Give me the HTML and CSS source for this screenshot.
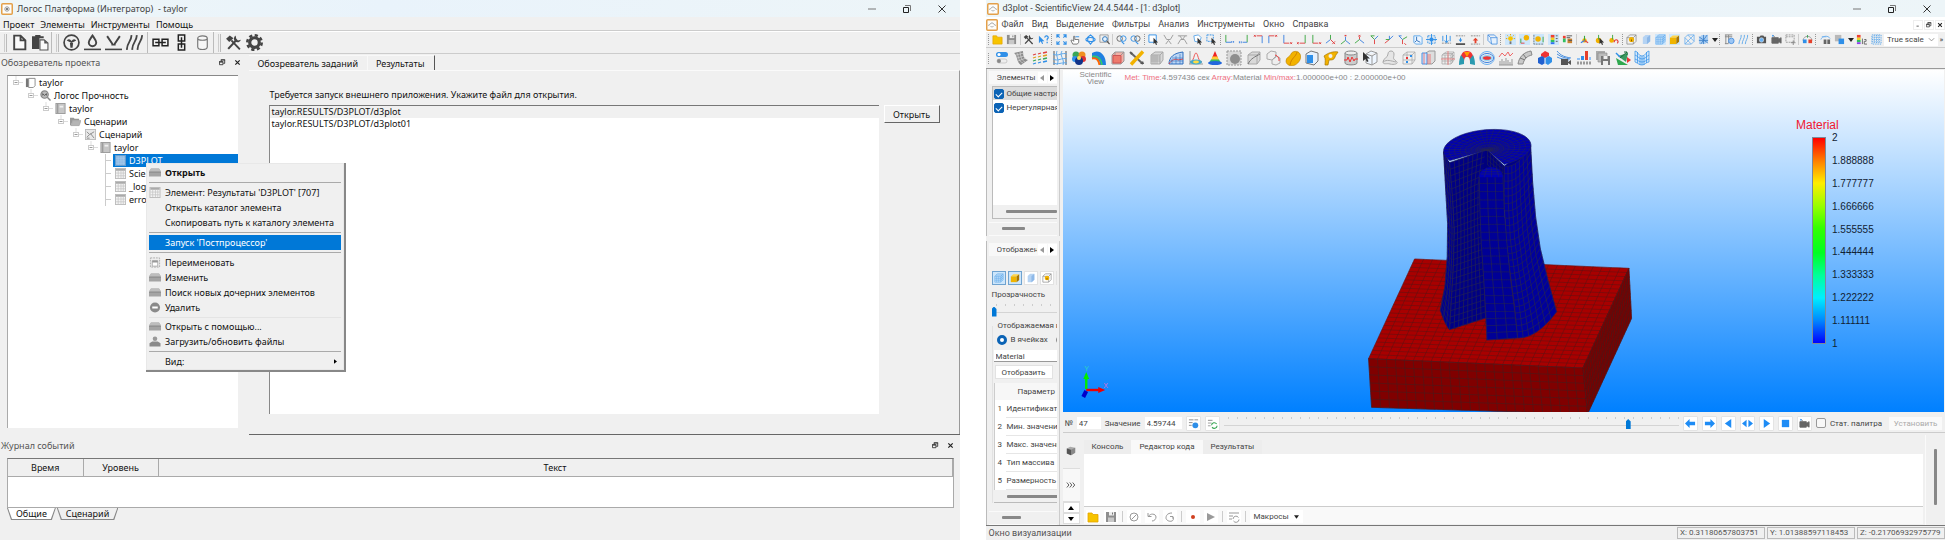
FILE: index.html
```html
<!DOCTYPE html>
<html lang="ru">
<head>
<meta charset="utf-8">
<title>Логос Платформа</title>
<link rel="stylesheet" href="styles.css">
</head>
<body class="desk">
<svg class="defs" aria-hidden="true">
  <defs>
    <symbol id="min" viewBox="0 0 10 10"><path d="M1 5h8" stroke="#777" fill="none"/></symbol>
    <symbol id="max" viewBox="0 0 10 10"><path d="M1.5 3.5h5v5h-5z" stroke="#222" fill="none"/><path d="M3 1.5h5.5V7" stroke="#777" fill="none"/></symbol>
    <symbol id="cls" viewBox="0 0 10 10"><path d="M1.5 1.5l7 7M8.500 1.500l-7 7" stroke="#333" fill="none"/></symbol>
    <symbol id="float" viewBox="0 0 8 8"><path d="M.5 3.500h4v3h-4zM2.500 3V1h4v4H5" stroke="#333" fill="none"/><path d="M0 3h5M2 1h5" stroke="#333"/></symbol>
    <symbol id="x8" viewBox="0 0 8 8"><path d="M1.500 1.500l5 5M6.500 1.500l-5 5" stroke="#222" stroke-width="1.400" fill="none"/></symbol>
    <symbol id="app" viewBox="0 0 12 12"><rect x=".75" y=".75" width="10.500" height="10.500" rx="1" fill="#fdfdfb" stroke="#e3a04a" stroke-width="1.500"/><circle cx="6" cy="6" r="2.200" fill="none" stroke="#999"/><circle cx="6" cy="6" r="1" fill="#555"/></symbol>
    <symbol id="eye" viewBox="0 0 12 12"><rect x=".75" y=".75" width="10.500" height="10.500" rx="1" fill="#fdfdfb" stroke="#e3a04a" stroke-width="1.500"/><path d="M2 6.500l2-1 1-1.500h2l1 1.500 2 1M4.500 7l1 1h1l1-1" fill="none" stroke="#999" stroke-width=".8"/></symbol>
    <symbol id="sheet" viewBox="0 0 12 12"><rect x=".5" y=".5" width="11" height="11" fill="#f4f4f4" stroke="#bbb"/><path d="M1 2h10" stroke="#aaa" stroke-width="2"/><path d="M1 5.500h10M1 8.500h10M3.500 3v8M6.500 3v8M9 3v8" stroke="#c4c4c4" stroke-width=".8"/></symbol>
    <symbol id="case" viewBox="0 0 12 10"><path d="M2 1h8l2 3v5H0V4z" fill="#a4a4a4"/><path d="M2 1h8l1.500 2.500H.5z" fill="#bdbdbd"/><path d="M0 5h12" stroke="#8c8c8c" stroke-width=".7"/></symbol>
    <symbol id="book" viewBox="0 0 12 12"><rect x="1" y=".5" width="10" height="11" fill="#c6c6c6" stroke="#999"/><path d="M3 1v10" stroke="#888"/><path d="M5 3h4v2H5z" fill="#eee"/></symbol>
    <symbol id="exp" viewBox="0 0 10 13"><path d="M3 0v4M5.500 6.500H10" stroke="#ddd" fill="none"/><rect x=".5" y="4.500" width="5" height="4" fill="#fff" stroke="#ccc"/><path d="M1.500 6.500h3" stroke="#999"/></symbol>
    <symbol id="tee" viewBox="0 0 10 13"><path d="M2.500 0v13M3 6.500h5" stroke="#ccc" fill="none"/></symbol>
    <symbol id="fold" viewBox="0 0 12 12"><path d="M1 2h4l1 1.500h5V11H1z" fill="#f7c400" stroke="#e5a400" stroke-width=".8"/></symbol>
    <symbol id="save" viewBox="0 0 12 12"><path d="M1 1h10v10H1z" fill="#8e8e8e"/><path d="M4 1h5v3.500H4z" fill="#eee"/><path d="M7 1.500h1v2H7z" fill="#777"/><path d="M3 6.500h6V11H3z" fill="#c8c8c8"/></symbol>
    <symbol id="tools" viewBox="0 0 16 16"><path d="M3 14l7.500-8" stroke="#444" stroke-width="2"/><path d="M10 1.500a3.400 3.400 0 1 0 5 4l-2.800.5-1.700-1.700z" fill="#444"/><path d="M6 6l8 8.500" stroke="#444" stroke-width="1.800"/><path d="M1 4.500L4.500 1.500 8 4 4 7.500z" fill="#444"/></symbol>
    <symbol id="cubeY" viewBox="0 0 12 12"><path d="M1 4l3-2.500h7L8 4z" fill="#ffd54a"/><path d="M1 4h7v7H1z" fill="#f0b400"/><path d="M8 4l3-2.500V8.500L8 11z" fill="#a87600"/></symbol>
    <symbol id="cubeB" viewBox="0 0 12 12"><path d="M1 4l3-3h7v7l-3 3H1zM1 4h7v7M8 4l3-3M3.300 4v7M5.700 4v7M1 6.300h7l3-3M1 8.600h7l3-3M2.500 2.500h7v7" fill="none" stroke="#5fa8ea" stroke-width=".7"/></symbol>
    <symbol id="cubeL" viewBox="0 0 12 12"><path d="M2 3.500l3-2.500h5v7l-3 3H2z" fill="#b5d3f3"/><path d="M6.500 4v7L10 8V1z" fill="#8db8e8"/></symbol>
    <symbol id="cubeD" viewBox="0 0 12 12"><path d="M1 4l3-3h7v7l-3 3H1zM1 4h7v7M8 4l3-3" fill="none" stroke="#888" stroke-width=".8"/><circle cx="6" cy="6" r="2.800" fill="#f2b200"/><path d="M6 6v2" stroke="#7a5600"/></symbol>
    <symbol id="cur" viewBox="0 0 12 12"><path d="M6 4v7l1.600-1.400L8.700 12l1.200-.6-1-2.200H11z" fill="#333"/></symbol>
    <symbol id="axes" viewBox="0 0 12 12"><path d="M6 7V2" stroke="#3aa640" stroke-width="1.200"/><path d="M6 7l4 2.500" stroke="#e04040" stroke-width="1.200"/><path d="M6 7L2 9.500" stroke="#3a80e0" stroke-width="1.200"/></symbol>
    <symbol id="loop" viewBox="0 0 12 12"><rect x="1" y="2" width="5" height="1" fill="#888"/><path d="M1 5.500h4M1 8.500h3" stroke="#999"/><path d="M5 8a3 3 0 0 1 5.500-1.500M11 8.500a3 3 0 0 1-5.500 1.500" stroke="#3aa655" fill="none" stroke-width="1.200"/></symbol>
    <symbol id="cam" viewBox="0 0 12 12"><path d="M2 1.500l2 1.500M1 4h7v6H1zM8 6l3-2v6L8 8z" fill="#666" stroke="#666"/><circle cx="2" cy="2" r=".9" fill="#39f"/></symbol>
    <symbol id="bx" viewBox="0 0 16 16"><path d="M2 5l4-3h8v8l-3 4H2z" fill="#d9d9d9" stroke="#a9a9a9"/><path d="M2 5h9v9M11 5l3-3" fill="none" stroke="#a9a9a9"/></symbol>
    <symbol id="grid" viewBox="0 0 16 16"><path d="M2 5l4-3h8v8l-3 4H2zM2 5h9v9M11 5l3-3M5 5v9M8 5v9M2 8h9l3-3M2 11h9l3-3M3.500 3.500h9v9" fill="none" stroke="#aaa" stroke-width=".8"/></symbol>
  </defs>
</svg>

<section class="win left-win" aria-label="Логос Платформа">
  <header class="title">
    <svg class="i12"><use href="#app"/></svg><span class="grow">Логос Платформа (Интегратор)&nbsp; - taylor</span>
    <div class="winbtns"><button aria-label="Свернуть"><svg><use href="#min"/></svg></button><button aria-label="Окно"><svg><use href="#max"/></svg></button><button aria-label="Закрыть"><svg><use href="#cls"/></svg></button></div>
  </header>
  <nav class="menubar"><button>Проект</button><button>Элементы</button><button>Инструменты</button><button>Помощь</button></nav>
  <div class="bigbar">
    <i class="grip2"></i>
    <button aria-label="Создать"><svg viewBox="0 0 16 16"><path d="M3 1.500h6l4.500 4.500v8.500H3zM9 1.500V6h4.500" fill="#fafafa" stroke="#444" stroke-width="1.800"/></svg></button>
    <button aria-label="Вставить"><svg viewBox="0 0 16 16"><path d="M0 2h3V1h5v1h3v2H7v10H0z" fill="#444"/><path d="M7.500 5.500h4l3.500 3V15H7.500z" fill="#fafafa" stroke="#555"/><path d="M11.500 5.500V9H15z" fill="#555"/></svg></button>
    <i class="vline"></i><i class="grip2"></i>
    <button aria-label="Вентиляция"><svg viewBox="0 0 16 16"><circle cx="8" cy="8" r="7" fill="none" stroke="#444" stroke-width="1.600"/><path d="M8 8.500L3.500 6Q6 3.500 8 6.500Q10 3.500 12.500 6zM6.500 8.500h3L9 13H7z" fill="#444"/></svg></button>
    <button aria-label="Жидкость"><svg viewBox="0 0 16 16"><path d="M8 1.500C6 4.500 4.500 6 4.500 8a3.500 3.500 0 0 0 7 0C11.500 6 10 4.500 8 1.500z" fill="none" stroke="#444" stroke-width="1.800"/><path d="M0 14.500h16" stroke="#444" stroke-width="1.500"/></svg></button>
    <button aria-label="Прочность"><svg viewBox="0 0 16 16"><path d="M2 2l5 7.500M14 2L9 9.500M6 10h4" fill="none" stroke="#444" stroke-width="1.800"/><path d="M0 14.500h16" stroke="#444" stroke-width="1.500"/></svg></button>
    <button aria-label="Тепло"><svg viewBox="0 0 16 16"><path d="M5 1C6 6 0 9 1 15M10 1C11 6 5 9 6 15M15 1c1 5-5 8-4 14" fill="none" stroke="#444" stroke-width="1.700"/></svg></button>
    <i class="vline lone"></i>
    <button aria-label="Связь горизонтальная"><svg viewBox="0 0 16 16"><path d="M1 5h5.500v6H1zM9.500 5H15v6H9.500zM3 8h10" fill="none" stroke="#222" stroke-width="1.400"/></svg></button>
    <button aria-label="Связь вертикальная"><svg viewBox="0 0 16 16"><path d="M5 1h6v5.500H5zM5 9.500h6V15H5zM8 3v10" fill="none" stroke="#222" stroke-width="1.400"/></svg></button>
    <button aria-label="База"><svg viewBox="0 0 16 16"><path d="M3.500 4v8c0 3.500 9 3.500 9 0V4c0-3-9-3-9 0c0 2.500 9 2.500 9 0" fill="#f6f6f6" stroke="#777" stroke-width="1.100"/></svg></button>
    <i class="vline"></i><i class="grip2"></i>
    <button aria-label="Сервис"><svg><use href="#tools"/></svg></button>
    <button aria-label="Настройки"><svg viewBox="0 0 16 16"><circle cx="8" cy="8" r="4.500" fill="none" stroke="#444" stroke-width="3"/><circle cx="8" cy="8" r="6.800" fill="none" stroke="#444" stroke-width="2.400" stroke-dasharray="3 2.340"/></svg></button>
  </div>

  <div class="work">
    <section class="dock">
      <header class="dockhead"><span class="grow">Обозреватель проекта</span><button aria-label="Открепить"><svg><use href="#float"/></svg></button><button aria-label="Закрыть"><svg><use href="#x8"/></svg></button></header>
      <div class="tree">
        <ul><li><div class="row"><svg class="ex"><use href="#exp"/></svg><svg class="ti" viewBox="0 0 12 12"><path d="M1 1.500h3V11H1z" fill="#777"/><path d="M4 1.500h7v8l-2 2H4z" fill="#fff" stroke="#888"/></svg>taylor</div>
        <ul><li><div class="row"><svg class="ex"><use href="#exp"/></svg><svg class="ti" viewBox="0 0 12 12"><circle cx="5" cy="5" r="4" fill="#bbb" stroke="#888" stroke-width="1.300"/><path d="M8 8l3.500 3.500" stroke="#888" stroke-width="1.600"/><path d="M3 6V4l2 2 2-2v2" fill="none" stroke="#555"/></svg>Логос Прочность</div>
        <ul><li><div class="row"><svg class="ex"><use href="#exp"/></svg><svg class="ti"><use href="#book"/></svg>taylor</div>
        <ul><li><div class="row"><svg class="ex"><use href="#exp"/></svg><svg class="ti" viewBox="0 0 12 12"><path d="M0 2h4l1 1h5v2H3l-2 5H0z" fill="#999"/><path d="M3 5h9l-2 5.500H1z" fill="#b5b5b5" stroke="#999" stroke-width=".6"/></svg>Сценарии</div>
        <ul><li><div class="row"><svg class="ex"><use href="#exp"/></svg><svg class="ti" viewBox="0 0 12 12"><rect x=".5" y=".5" width="11" height="11" fill="#e8e8e8" stroke="#bbb"/><path d="M2 3l3 3-3 3M5 6l5-3M6 5l4 5M2 10h3" stroke="#888" fill="none"/></svg>Сценарий</div>
        <ul><li><div class="row"><svg class="ex"><use href="#exp"/></svg><svg class="ti"><use href="#book"/></svg>taylor</div>
        <ul>
          <li><div class="row"><svg class="ex"><use href="#tee"/></svg><div class="leaf sel"><svg class="ti" viewBox="0 0 12 12"><rect x=".5" y=".5" width="11" height="11" fill="#8cb8e2" stroke="#6a9dcc"/><path d="M1 3.500h10M1 6.500h10M1 9h10M3.500 1v10M6.500 1v10M9 1v10" stroke="#a9cbea" stroke-width=".7"/></svg>D3PLOT</div></div></li>
          <li><div class="row"><svg class="ex"><use href="#tee"/></svg><div class="leaf"><svg class="ti"><use href="#sheet"/></svg>Scie</div></div></li>
          <li><div class="row"><svg class="ex"><use href="#tee"/></svg><div class="leaf"><svg class="ti"><use href="#sheet"/></svg>_log</div></div></li>
          <li><div class="row"><svg class="ex"><use href="#tee"/></svg><div class="leaf"><svg class="ti"><use href="#sheet"/></svg>erro</div></div></li>
        </ul></li></ul></li></ul></li></ul></li></ul></li></ul></li></ul>
        <div class="ctx" role="menu">
          <button class="strong" role="menuitem"><svg><use href="#case"/></svg>Открыть</button><hr>
          <button role="menuitem"><svg><use href="#sheet"/></svg>Элемент: Результаты 'D3PLOT' [707]</button>
          <button role="menuitem"><svg></svg>Открыть каталог элемента</button>
          <button role="menuitem"><svg></svg>Скопировать путь к каталогу элемента</button><hr>
          <button class="hot" role="menuitem"><svg></svg>Запуск 'Постпроцессор'</button><hr>
          <button role="menuitem"><svg viewBox="0 0 12 12"><path d="M1 1h10v10H1z" fill="#eee" stroke="#aaa" stroke-dasharray="2 1"/><path d="M3 4h6v6H3z" fill="#fff" stroke="#aaa"/><path d="M3 5h6" stroke="#999" stroke-width="2"/></svg>Переименовать</button>
          <button role="menuitem"><svg><use href="#case"/></svg>Изменить</button>
          <button role="menuitem"><svg><use href="#case"/></svg>Поиск новых дочерних элементов</button>
          <button role="menuitem"><svg viewBox="0 0 12 12"><circle cx="6" cy="6" r="5.500" fill="#8a8a8a"/><path d="M3 6h6" stroke="#fff" stroke-width="2.200"/></svg>Удалить</button><hr class="pale">
          <button role="menuitem"><svg><use href="#case"/></svg>Открыть с помощью...</button>
          <button role="menuitem"><svg viewBox="0 0 12 12"><circle cx="6" cy="3" r="2.500" fill="#999"/><path d="M0 11.500V8l3-2h6l3 2v3.500z" fill="#8a8a8a"/></svg>Загрузить/обновить файлы</button><hr>
          <button role="menuitem"><svg></svg><span class="grow">Вид:</span><svg class="arr" viewBox="0 0 4 6"><path d="M0 0l4 3-4 3z" fill="#000"/></svg></button>
        </div>
      </div>
    </section>

    <section class="center">
      <div class="tabs"><button>Обозреватель заданий</button><button class="on">Результаты</button></div>
      <div class="page">
        <p class="ask">Требуется запуск внешнего приложения. Укажите файл для открытия.</p>
        <div class="pick">
          <ul class="files"><li class="cur">taylor.RESULTS/D3PLOT/d3plot</li><li>taylor.RESULTS/D3PLOT/d3plot01</li></ul>
          <button class="classic">Открыть</button>
        </div>
      </div>
    </section>
  </div>

  <section class="log">
    <header class="dockhead"><span class="grow">Журнал событий</span><button aria-label="Открепить"><svg><use href="#float"/></svg></button><button aria-label="Закрыть"><svg><use href="#x8"/></svg></button></header>
    <div class="logbox"><table><thead><tr><th class="c1">Время</th><th class="c1">Уровень</th><th>Текст</th></tr></thead></table></div>
    <div class="flaps"><button class="on"><span>Общие</span></button><button><span>Сценарий</span></button></div>
  </section>
</section>

<section class="win right-win" aria-label="ScientificView">
  <header class="title">
    <svg class="i12"><use href="#eye"/></svg><span class="grow">d3plot - ScientificView 24.4.5444 - [1: d3plot]</span>
    <div class="winbtns"><button aria-label="Свернуть"><svg><use href="#min"/></svg></button><button aria-label="Окно"><svg><use href="#max"/></svg></button><button aria-label="Закрыть"><svg><use href="#cls"/></svg></button></div>
  </header>
  <nav class="menubar2"><svg class="i12"><use href="#eye"/></svg><button>Файл</button><button>Вид</button><button>Выделение</button><button>Фильтры</button><button>Анализ</button><button>Инструменты</button><button>Окно</button><button>Справка</button>
    <div class="mdi"><button aria-label="Свернуть"><svg viewBox="0 0 8 8"><path d="M2 5.500h3" stroke="#333"/></svg></button><button aria-label="Окно"><svg><use href="#float"/></svg></button><button aria-label="Закрыть"><svg><use href="#x8"/></svg></button></div>
  </nav>

  <div class="bar1" role="toolbar">
    <i class="grip"></i>
    <button><svg><use href="#fold"/></svg></button><button><svg><use href="#save"/></svg></button><i class="sp"></i>
    <button><svg><use href="#tools"/></svg></button>
    <button><svg viewBox="0 0 12 12"><path d="M1 2v8l2-2 1.500 3 1-.5L4.500 8H7z" fill="#2f8fe8"/><path d="M7.500 4a1.800 1.800 0 1 1 2.500 1.500V7M10 8.500v1.500" fill="none" stroke="#2f8fe8" stroke-width="1.300"/></svg></button>
    <i class="grip"></i>
    <button><svg viewBox="0 0 12 12"><path d="M1 4V1h3M8 1h3v3M11 8v3H8M4 11H1V8M1 1l3 3M11 1L8 4M11 11L8 8M1 11l3-3" fill="none" stroke="#2f8fe8" stroke-width="1.200"/></svg></button>
    <button><svg viewBox="0 0 12 12"><path d="M3 11L1 7l1.500-.5L4 8V2.500h1.200V6h4.300v3L8 11z" fill="#fff" stroke="#666" stroke-width=".9"/><path d="M6 3h4" stroke="#2f8fe8"/></svg></button>
    <button><svg viewBox="0 0 12 12"><path d="M6 1l3 2.500v4L6 11 3 7.500v-4zM1 6c0-3 10-3 10 0s-10 3-10 0" fill="none" stroke="#2f8fe8" stroke-width="1.200"/></svg></button>
    <button><svg viewBox="0 0 12 12"><path d="M1 1h9v8H1z" fill="none" stroke="#888" stroke-width=".8"/><circle cx="6.500" cy="5.500" r="2.600" fill="#e6f3ff" stroke="#2470b8"/><path d="M8.500 7.500L11.500 11" stroke="#555" stroke-width="1.300"/></svg></button>
    <i class="sp"></i>
    <button><svg viewBox="0 0 12 12"><circle cx="4" cy="5" r="3" fill="none" stroke="#666"/><circle cx="8" cy="5" r="3" fill="none" stroke="#2f8fe8"/><path d="M6 8l3 3" stroke="#2f8fe8" stroke-width="1.200"/></svg></button>
    <button><svg viewBox="0 0 12 12"><circle cx="4" cy="5" r="3" fill="none" stroke="#2f8fe8"/><circle cx="8" cy="5" r="3" fill="none" stroke="#666"/><path d="M6 8l3 3" stroke="#2f8fe8" stroke-width="1.200"/></svg></button>
    <i class="grip"></i>
    <button><svg viewBox="0 0 12 12"><path d="M1 1h8v8H1z" fill="#fff" stroke="#2f8fe8"/><use href="#cur"/></svg></button>
    <button><svg viewBox="0 0 12 12"><path d="M1 1l3 5h4l3-5M3 11l3-4 3 4" fill="none" stroke="#999"/></svg></button>
    <button><svg viewBox="0 0 12 12"><path d="M1 2h10M3 2l3 4 3-4M1 11l3-5h4l3 5" fill="none" stroke="#999"/></svg></button>
    <button><svg viewBox="0 0 12 12"><path d="M2 2l5-1 3 3-2 5-5-1z" fill="#fff" stroke="#5fa8ea"/><use href="#cur"/></svg></button>
    <button><svg viewBox="0 0 12 12"><path d="M1 1h7v7H1z" fill="none" stroke="#2f8fe8" stroke-dasharray="2 1"/><use href="#cur"/></svg></button>
    <i class="grip"></i>
    <button><svg viewBox="0 0 12 12"><path d="M2 1v8" stroke="#3aa640"/><path d="M2 9h6" stroke="#3a80e0"/><path d="M8 8.500h3" stroke="#3a80e0" stroke-width="2" stroke-dasharray="1 1"/></svg></button>
    <button><svg viewBox="0 0 12 12"><path d="M10 1v8" stroke="#3aa640"/><path d="M10 9H5" stroke="#3a80e0"/><path d="M1 9h4" stroke="#3a80e0" stroke-width="2" stroke-dasharray="1 1"/></svg></button>
    <button><svg viewBox="0 0 12 12"><path d="M10 2v8" stroke="#3a80e0"/><path d="M10 2H4M1 1l2 2M3 1L1 3" stroke="#e04040"/></svg></button>
    <button><svg viewBox="0 0 12 12"><path d="M2 2v8" stroke="#3a80e0"/><path d="M2 2h6M9 1l2 2M11 1L9 3" stroke="#e04040"/></svg></button>
    <button><svg viewBox="0 0 12 12"><path d="M2 1v9" stroke="#3a80e0"/><path d="M2 10h6M9 9l2 2M11 9l-2 2" stroke="#e04040"/></svg></button>
    <button><svg viewBox="0 0 12 12"><path d="M10 1v9" stroke="#3aa640"/><path d="M10 10H4M1 9l2 2M3 9l-2 2" stroke="#e04040"/></svg></button>
    <button><svg viewBox="0 0 12 12"><path d="M2 1v9" stroke="#3aa640"/><path d="M2 10h6M9 9l2 2M11 9l-2 2" stroke="#e04040"/></svg></button>
    <button><svg viewBox="0 0 12 12"><path d="M6 6V1" stroke="#3aa640"/><path d="M6 6l-5 4" stroke="#3a80e0"/><path d="M6 6l3 3M8 8l3 3M11 8l-3 3" stroke="#e04040"/></svg></button>
    <button><svg viewBox="0 0 12 12"><path d="M6 7V3M6 7l5 4" stroke="#3a80e0"/><path d="M6 7l-5 4" stroke="#3aa640"/><path d="M5 1h2v1.500H5z" fill="#e04040"/></svg></button>
    <button><svg viewBox="0 0 12 12"><path d="M6 6V3M5 1l2 2M7 1L5 3" stroke="#e04040"/><path d="M6 6l5 4" stroke="#3a80e0"/><path d="M6 6l-5 4" stroke="#3aa640"/></svg></button>
    <button><svg viewBox="0 0 12 12"><path d="M6 6V11" stroke="#e04040"/><path d="M6 6l4-4" stroke="#3a80e0"/><path d="M6 6L2 2h4" stroke="#3aa640" fill="none"/></svg></button>
    <button><svg viewBox="0 0 12 12"><path d="M7 6l-5 4" stroke="#e04040"/><path d="M7 6l4-4M7 6V2" stroke="#3a80e0"/><path d="M7 6H3" stroke="#3aa640"/></svg></button>
    <button><svg viewBox="0 0 12 12"><path d="M6 6V11M8 10l2 2" stroke="#e04040"/><path d="M6 6l5-3" stroke="#3aa640"/><path d="M6 6L2 2h3" stroke="#3a80e0" fill="none"/></svg></button>
    <button><svg viewBox="0 0 12 12"><path d="M2 2h7l2 2v7H4L2 9z" fill="#eaf4ff" stroke="#5fa8ea"/><path d="M5 3v4l4 2M5 7l-2 2" stroke="#2f6fb8" fill="none"/></svg></button>
    <button><svg viewBox="0 0 12 12"><path d="M6 0v12M0 6h12" stroke="#2f8fe8"/><path d="M2 2h8v8H2z" fill="none" stroke="#2f8fe8" stroke-dasharray="2 1"/><path d="M4 4h4v4H4z" fill="#2f8fe8"/></svg></button>
    <button><svg viewBox="0 0 12 12"><path d="M2 2v6M10 2v6M6 1v8M4 7l2 3 2-3" stroke="#2f8fe8" fill="none"/><path d="M1 10h10" stroke="#888" stroke-dasharray="2 1"/></svg></button>
    <button><svg viewBox="0 0 12 12"><path d="M1 2h10" stroke="#888" stroke-dasharray="2 1"/><path d="M4 6h4L6 9zM5.500 4h1v3h-1z" fill="#2f8fe8"/><path d="M1 11h10" stroke="#222" stroke-width="1.500"/></svg></button>
    <button><svg viewBox="0 0 12 12"><path d="M1 2h10M1 11h10" stroke="#888" stroke-dasharray="2 1"/><path d="M3 7l3-3 3 3H7v3H5V7z" fill="#e5402b"/></svg></button>
    <i class="sp"></i>
    <button><svg viewBox="0 0 12 12"><path d="M1 1h7l3 3v7H5L1 7zM1 1l3 3h7M4 4l1 7" fill="#e6f1fd" stroke="#4a90e0" stroke-width=".9"/></svg></button>
    <i class="grip"></i>
    <button class="on"><svg viewBox="0 0 12 12"><circle cx="6" cy="5" r="2.600" fill="#f7c400"/><path d="M5 8h2v3H5z" fill="#777"/><path d="M6 0v1.500M1 5h1.500M9.500 5H11M2.500 1.500l1 1M9.500 1.500l-1 1" stroke="#e5a400"/></svg></button>
    <button class="on"><svg viewBox="0 0 12 12"><circle cx="8" cy="4" r="3" fill="#f2b200"/><path d="M2 5v5" stroke="#3aa640"/><path d="M2 10h4" stroke="#e04040"/></svg></button>
    <button class="on"><svg viewBox="0 0 12 12"><circle cx="5.500" cy="5.500" r="3" fill="#f2b200"/><path d="M1 1v10h10" stroke="#777" stroke-dasharray="2 1" fill="none"/><path d="M11 3v6" stroke="#3aa640"/></svg></button>
    <button class="on"><svg viewBox="0 0 12 12"><path d="M3 1h4v3H3z" fill="#f04030"/><path d="M3 4h4v2.500H3z" fill="#f0d020"/><path d="M3 6.500h4V9H3z" fill="#30c060"/><path d="M3 9h4v2H3z" fill="#3070f0"/><path d="M8.500 2h2M8.500 5h2M8.500 8h2" stroke="#555"/></svg></button>
    <button><svg viewBox="0 0 12 12"><path d="M1 2h3v3H1z" fill="#f04030"/><path d="M1 5h3v4H1z" fill="#30c060"/><path d="M6 5h5v5H6z" fill="#c98030"/><path d="M5 2h6M5 4h4M7 7h4" stroke="#555"/></svg></button>
    <i class="sp"></i>
    <button><svg viewBox="0 0 12 12"><circle cx="6" cy="7" r="2.400" fill="#f2b200"/><use href="#axes"/></svg></button>
    <button><svg viewBox="0 0 12 12"><circle cx="5" cy="7" r="3" fill="#f2b200"/><path d="M5 1v5" stroke="#3aa640"/><use href="#cur"/></svg></button>
    <button><svg viewBox="0 0 12 12"><circle cx="4" cy="7" r="2.600" fill="#f2b200"/><path d="M5 1v5" stroke="#3aa640"/><path d="M7 9a2 2 0 1 1 3 1" stroke="#e04040" fill="none" stroke-width="1.300"/></svg></button>
    <i class="grip"></i>
    <button><svg><use href="#cubeD"/></svg></button><button><svg><use href="#cubeL"/></svg></button><button class="on"><svg><use href="#cubeB"/></svg></button><button class="on"><svg><use href="#cubeY"/></svg></button>
    <button><svg viewBox="0 0 12 12"><path d="M1 4l3-3h7v7l-3 3H1zM1 4l7 7M4 1l7 7M1 11L11 1" fill="none" stroke="#6fb0ee" stroke-width=".9"/></svg></button>
    <button><svg viewBox="0 0 12 12"><path d="M1 4l3-3h7v7l-3 3H1z" fill="#a9cdf2"/><path d="M1 3l10 7M3 11L10 1M1 7h10M6 1v10" stroke="#3a80c8" stroke-width=".9"/></svg></button>
    <button class="car"><svg viewBox="0 0 6 4"><path d="M0 0h6L3 4z" fill="#222"/></svg></button>
    <i class="grip"></i>
    <button><svg viewBox="0 0 12 12"><path d="M1 1h8M1 3h8M2 1v10M5 1v9M1 10.500h4" stroke="#888" fill="none"/><circle cx="8" cy="7.500" r="3" fill="#9cc6f4" stroke="#4a90e0"/></svg></button>
    <button><svg viewBox="0 0 12 12"><path d="M3.500 1C4 5 1 7 1 11M7 1c.5 4-2.500 6-2.500 10M10.500 1c.5 4-2.500 6-2.500 10" stroke="#5fa8ea" fill="none"/></svg></button>
    <i class="grip"></i>
    <button><svg viewBox="0 0 12 12"><path d="M1 3h3l1-1.500h3L9 3h2v7H1z" fill="#555"/><circle cx="6" cy="6.500" r="2.400" fill="#6ab4f8" stroke="#ddd" stroke-width=".7"/></svg></button>
    <button><svg><use href="#cam"/></svg></button>
    <button><svg viewBox="0 0 12 12"><path d="M1 1h9v8H1zM1 3h9" fill="none" stroke="#999" stroke-dasharray="2 1"/><path d="M9 7v5M6.500 9.500h5" stroke="#888"/></svg></button>
    <i class="sp"></i>
    <button><svg viewBox="0 0 12 12"><path d="M1 7c1-6 9-6 10 0" fill="none" stroke="#999"/><path d="M1 6h4v4H1z" fill="#2f8fe8"/><path d="M7 6h4v4H7z" fill="#e5402b"/><path d="M5.500 1h1v3h-1z" fill="#3aa655"/></svg></button>
    <i class="grip"></i>
    <button><svg viewBox="0 0 12 12"><path d="M1 6c1-4 8-5 10-1M2 3h5" fill="none" stroke="#6fb0ee"/><path d="M4 6h3v5H4zM8 6h3v5H8z" fill="#666"/></svg></button>
    <button><svg viewBox="0 0 12 12"><path d="M1 1h7v7H1z" fill="#b9b9b9"/><path d="M5 5h6v6H5z" fill="#2f8fe8"/></svg></button>
    <button class="car"><svg viewBox="0 0 6 4"><path d="M0 0h6L3 4z" fill="#222"/></svg></button>
    <button><svg viewBox="0 0 12 12"><path d="M1 1h4v3H1z" fill="#f04030"/><path d="M1 4h4v2.500H1z" fill="#f0d020"/><path d="M1 6.500h4V9H1z" fill="#30c060"/><path d="M1 9h4v2H1z" fill="#9040f0"/><path d="M7 5v6M9 6h2v2H9v3h3" stroke="#666" fill="none"/></svg></button>
    <button><svg viewBox="0 0 12 12"><path d="M1 1h10v10H1zM1 3.500h10M1 6h10M1 8.500h10M3.500 1v10M6 1v10M8.500 1v10" fill="none" stroke="#5fa8ea" stroke-dasharray="1.500 1"/></svg></button>
    <label class="combo"><select aria-label="Масштаб"><option>True scale</option></select><svg viewBox="0 0 8 6"><path d="M1 1l3 3 3-3" fill="none" stroke="#888"/></svg></label>
    <button class="more">»</button>
  </div>

  <div class="bar2" role="toolbar">
    <i class="grip"></i>
    <div class="tools2">
    <button><svg viewBox="0 0 16 16"><rect x="2" y="2" width="12" height="5" rx="2.500" fill="#2f8fe8"/><circle cx="5" cy="4.500" r="1.600" fill="#fff"/><rect x="3" y="9" width="10" height="4" rx="2" fill="#eee" stroke="#bbb" stroke-width=".7"/><circle cx="5" cy="11" r="2" fill="#888"/></svg></button>
    <button><svg viewBox="0 0 16 16"><path d="M1 3l9-2c0 5 1 8 5 9l-7 5C3 12 5 6 1 3z" fill="#8c8c8c"/><path d="M3 5l8-2M4 8l7-2M5 11l8-3M4 3c2 4 1 8 6 10M7 2c1 5 1 8 5 10" stroke="#d5d5d5" stroke-width=".7" fill="none"/></svg></button>
    <button><svg viewBox="0 0 16 16"><path d="M1 5l3-1M6 4l3-1M11 3l4-1" stroke="#e04040" stroke-width="1.300"/><path d="M1 8l3-1M6 7l3-1M11 6l4-1" stroke="#e0a020" stroke-width="1.300"/><path d="M1 11l3-1M6 10l3-1M11 9l4-1" stroke="#3aa655" stroke-width="1.300"/><path d="M1 14l3-1M6 13l3-1M11 12l4-1" stroke="#2f8fe8" stroke-width="1.300"/></svg></button>
    <button><svg viewBox="0 0 16 16"><path d="M2 1v14M14 1v14" stroke="#555"/><path d="M5 1c-2 5 3 8 0 14M10 1c-3 5 3 8 1 14M1 4c5 3 9-2 14 0M1 9c5 3 9-2 14 0M1 13c5 2 9-1 14 0" stroke="#5fa8ea" fill="none"/></svg></button>
    <button><svg viewBox="0 0 16 16"><circle cx="5" cy="5" r="3.500" fill="#3aa655"/><circle cx="11" cy="5" r="3.500" fill="#f09020"/><circle cx="4" cy="9" r="3" fill="#2f8fe8"/><circle cx="12" cy="9" r="3" fill="#d33"/><circle cx="8" cy="11" r="4" fill="#138"/><circle cx="8" cy="8" r="2" fill="#fd5"/></svg></button>
    <button><svg viewBox="0 0 16 16"><path d="M1 3C7-1 15 3 15 15H9C9 10 6 8 1 9z" fill="#1f7fe0"/><path d="M1 6.500c6-1 9 2 10 8.500" stroke="#3c6" fill="none" stroke-width="1.500"/><path d="M1 8.500c5-1 7 2 7.500 6.500" stroke="#f60" fill="none" stroke-width="2"/></svg></button>
    <button><svg viewBox="0 0 16 16"><path d="M2 5l3-3h9v9l-3 3H2zM11 5l3-3M5 2v3" fill="#f2b0a6" stroke="#999"/><path d="M3 5.500h8V13H3z" fill="#ee7a6c" stroke="#c55"/></svg></button>
    <button><svg viewBox="0 0 16 16"><path d="M1 2l13 12" stroke="#666" stroke-width="2"/><path d="M14 1.500L2 14.500" stroke="#f2b200" stroke-width="3.400"/><path d="M1 2l3 1-2 2zM11 14l4 0-1-3z" fill="#555"/></svg></button>
    <button><svg viewBox="0 0 16 16"><use href="#bx"/><path d="M2 7h9M2 9h9M2 11h9M4 5v9M6 5v9M8 5v9" stroke="#a2a2a2" stroke-width=".7"/></svg></button>
    <button><svg viewBox="0 0 16 16"><path d="M1 14c0-7 5-11 14-12v12z" fill="#bcd6f4" stroke="#2f6fc0"/><path d="M1 14c2-4 7-6 9-4l5-1" stroke="#d44" fill="none"/><path d="M4 9v5M8 6v8M12 4v10M2 11h13M4 8h11" stroke="#2f6fc0" stroke-width=".6"/></svg></button>
    <button><svg viewBox="0 0 16 16"><path d="M1 14h14M2 1v13" stroke="#999"/><path d="M2 12c4 0 4-9 6-9s2 9 6 9" stroke="#e55" fill="none"/><ellipse cx="8" cy="12" rx="6" ry="2.500" fill="#4ac"/><ellipse cx="8" cy="12" rx="3" ry="1.400" fill="#fd4"/></svg></button>
    <button><svg viewBox="0 0 16 16"><path d="M8 1l3 7H5z" fill="#e22"/><path d="M5.500 6.500h5L12 10H4z" fill="#fc3"/><path d="M4 9.500h8l1.500 2.500h-11z" fill="#3b6"/><ellipse cx="8" cy="13" rx="7" ry="2" fill="#26d"/></svg></button>
    <button><svg viewBox="0 0 16 16"><path d="M1 1h14v14H1z" fill="#d8d8d8" stroke="#999" stroke-dasharray="2 1"/><circle cx="9" cy="9" r="5" fill="#8e8e8e"/></svg></button>
    <button><svg viewBox="0 0 16 16"><use href="#bx"/><path d="M2 14C5 8 9 7 14 4" stroke="#777" fill="none"/></svg></button>
    <button><svg viewBox="0 0 16 16"><path d="M2 4l4-3 5 1v5l-4 3-5-1zM7 10l4-4 4 2v5l-4 2-4-1z" fill="#eee" stroke="#aaa"/><path d="M10 5a5 5 0 0 1 4 6" stroke="#e44" fill="none"/></svg></button>
    <button><svg viewBox="0 0 16 16"><path d="M1 11C1 7 5 7 6 4s7-4 9 0-1 9-5 11-9 0-9-4z" fill="#f2b200" stroke="#b88000" stroke-width=".6"/><path d="M12 2c-1 5-6 6-7 13" stroke="#d08000" fill="none"/></svg></button>
    <button><svg viewBox="0 0 16 16"><path d="M2 4l5-3 7 2v8l-4 4-8-2z" fill="#e6f1fd" stroke="#777"/><path d="M3 5h6v8H3z" fill="#2f8fe8"/></svg></button>
    <button><svg viewBox="0 0 16 16"><path d="M1 6C5 3 10 1 15 2c-1 2-2 2-3 5s-3 3-6 3l-1 5H2c0-3 1-6-1-9z" fill="#f2b200" stroke="#a87600" stroke-width=".7"/><circle cx="7.500" cy="6" r="2" fill="#f0f0f0"/></svg></button>
    <button><svg viewBox="0 0 16 16"><path d="M2 3v10c0 2.500 12 2.500 12 0V3" fill="#ccc" stroke="#888"/><ellipse cx="8" cy="3" rx="6" ry="2" fill="#eee" stroke="#888"/><path d="M1 10h3l1-3 2 5 2-5 2 4 1-2h3" stroke="#e33" fill="none"/></svg></button>
    <button><svg viewBox="0 0 16 16"><path d="M4 4l5-3 6 2v9l-5 3-6-2zM10 6v9M4 4l6 2 5-3" fill="#eef6ff" stroke="#999"/><path d="M1 2v9l2.500-2L5 12l1.500-.8L5.200 8.500H8z" fill="#333"/></svg></button>
    <button><svg viewBox="0 0 16 16"><path d="M1 12c0-4 5-4 5-8s6-4 6 0-2 4 2 7-3 4-6 3-7 1-7-2z" fill="#e5e5e5" stroke="#aaa"/><path d="M1 12c4-3 8-1 13 0" stroke="#aaa" fill="none"/></svg></button>
    <button><svg viewBox="0 0 16 16"><path d="M2 5l4-3h8v8l-3 4H2zM2 5h9v9M11 5l3-3M6 2v8H2M6 10h8" fill="none" stroke="#aaa" stroke-width=".8"/><path d="M5 7h2v2H5z" fill="#e33"/><path d="M9 5h2v2H9zM5 11h2v2H5z" fill="#2f8fe8"/></svg></button>
    <button><svg viewBox="0 0 16 16"><path d="M6 3l3-2h6v10l-3 3H6z" fill="#ddd" stroke="#999"/><path d="M2 3h5v11H2z" fill="#cfe3fb" stroke="#4a90e0"/><path d="M4 3v11M8 4v10M10 4v10" stroke="#e66" stroke-width=".8"/></svg></button>
    <button><svg viewBox="0 0 16 16"><use href="#grid"/><path d="M1 9h14M8 1v14" stroke="#e77" stroke-width=".8"/></svg></button>
    <button><svg viewBox="0 0 16 16"><path d="M1 14C1 5 3 1 8 1s7 4 7 13l-4-1c0-5-1-6-3-6s-3 1-3 6z" fill="#e33"/><path d="M0 15c0-5 1-8 2-10l3 4v5zM16 15c0-5-1-8-2-10l-3 4v5z" fill="#2a9ab0"/><path d="M5 2l3 5 3-5" fill="#f90"/></svg></button>
    <button><svg viewBox="0 0 16 16"><ellipse cx="8" cy="8" rx="7.300" ry="6.500" fill="none" stroke="#6ab0f0"/><ellipse cx="8" cy="8" rx="6.500" ry="4.500" fill="none" stroke="#3a80e0"/><ellipse cx="8" cy="8" rx="5.500" ry="3" fill="#8fd0f0"/><ellipse cx="8" cy="8" rx="4" ry="1.800" fill="#e33"/></svg></button>
    <button><svg viewBox="0 0 16 16"><path d="M1 7l3-4 3 3 3-4 2 4 3-3" stroke="#e66" fill="none"/><path d="M2 15V11M4 15V9M6 15v-4M8 15V8M10 15v-5M12 15v-3M14 15v-6M1 15h14" stroke="#999"/></svg></button>
    <button><svg viewBox="0 0 16 16"><path d="M1 14C2 7 7 2 14 1l1 4C10 6 7 9 6 14z" fill="#c9c9c9" stroke="#888"/><path d="M3 8l5 2M6 4l3 4" stroke="#777"/></svg></button>
    <button><svg viewBox="0 0 16 16"><path d="M4 4l4-3 4 2v3L8 8 4 6z" fill="#e33"/><path d="M1 8l4-2 3 2v5l-3 2-4-2z" fill="#2060d0"/><path d="M8 8l4-2 3 2v4l-4 3-3-2z" fill="#2f8fe8"/><path d="M8 8v5" stroke="#fff"/></svg></button>
    <button><svg viewBox="0 0 16 16"><path d="M1 1c4 5 8 6 14 7M1 4c4 3 8 4 13 5M1 7c4 2 7 2 12 3" stroke="#4a90e0" fill="none"/><path d="M5 9h7v6H5zM12 12l3-2v5l-3-2z" fill="#555"/></svg></button>
    <button><svg viewBox="0 0 16 16"><path d="M9 1h3v9H9z" fill="#e5402b"/><path d="M5 6h3v4H5z" fill="#2f8fe8"/><path d="M1 8h3v2H1zM13 7h2v3h-2z" fill="#8fc0f4"/><path d="M1 13h14" stroke="#999" stroke-width="3" stroke-dasharray="2 1"/></svg></button>
    <button><svg viewBox="0 0 16 16"><path d="M1 1h9v9H1z" fill="#aaa"/><path d="M3 3h9v9H3z" fill="#bbb" stroke="#888" stroke-width=".6"/><path d="M6 6h9v9H6z" fill="#777"/><path d="M8.500 6h4v3h-4zM8 11h5v4H8z" fill="#eee"/></svg></button>
    <button><svg viewBox="0 0 16 16"><path d="M1 8l12 7H3z" fill="#2fa84f"/><path d="M3 6l10-3-2 9z" fill="#3a9a60"/><path d="M5 8l7-6M9 2h3v3" stroke="#1b6b3a" fill="none"/><path d="M12 7l4 3-4 3z" fill="#e33"/><path d="M1 3l4 4" stroke="#2f8fe8" stroke-width="1.500"/></svg></button>
    <button><svg viewBox="0 0 16 16"><path d="M1 1c3 0 3 5 7 5s4-5 7-5v11c-3 0-4 3-7 3s-4-2-7-3z" fill="#d5e8fb"/><path d="M1 1v11c3 1 4 3 7 3s4-3 7-3V1M1 1c3 0 3 5 7 5s4-5 7-5M1 5c3 1 4 4 7 4s5-3 7-4M1 9c3 1 4 3 7 3s4-2 7-3M3.500 2v11M6 6v9M8 6v9M10 6v9M12.500 2v11" stroke="#2f8fe8" fill="none" stroke-width=".7"/></svg></button>
    </div>
  </div>

  <div class="body2">
    <aside class="side">
      <section class="pane">
        <div class="ptab"><span>Элементы</span><button aria-label="Назад"><svg viewBox="0 0 4 6"><path d="M4 0L0 3l4 3z" fill="#999"/></svg></button><button aria-label="Вперёд"><svg viewBox="0 0 4 6"><path d="M0 0l4 3-4 3z" fill="#000"/></svg></button></div>
        <div class="checks">
          <label class="lit"><input type="checkbox" checked>Общие настройки</label>
          <label><input type="checkbox" checked>Нерегулярная</label>
          <div class="hs"><i></i></div>
        </div>
        <div class="hs2"><i></i></div>
      </section>
      <section class="pane second">
        <div class="ptab"><span>Отображение</span><button aria-label="Назад"><svg viewBox="0 0 4 6"><path d="M4 0L0 3l4 3z" fill="#999"/></svg></button><button aria-label="Вперёд"><svg viewBox="0 0 4 6"><path d="M0 0l4 3-4 3z" fill="#000"/></svg></button></div>
        <div class="props">
          <div class="modes"><button class="on"><svg><use href="#cubeB"/></svg></button><button class="on"><svg><use href="#cubeY"/></svg></button><button><svg><use href="#cubeL"/></svg></button><button><svg><use href="#cubeD"/></svg></button><button><svg><use href="#cubeB"/></svg></button></div>
          <label class="lab" for="op">Прозрачность</label>
          <input class="range small" id="op" type="range" value="0">
          <fieldset><legend>Отображаемая величина</legend>
            <div class="radios"><label><input type="radio" name="w" checked>В ячейках</label><input type="radio" name="w" aria-label="В узлах"></div>
            <select class="mat" aria-label="Величина"><option>Material</option></select>
            <div class="show"><button>Отобразить</button><button aria-label="Сбросить"></button></div>
            <table class="params"><thead><tr><th></th><th>Параметр</th></tr></thead><tbody><tr><td>1</td><td>Идентификатор</td></tr><tr><td>2</td><td>Мин. значение</td></tr><tr><td>3</td><td>Макс. значение</td></tr><tr><td>4</td><td>Тип массива</td></tr><tr><td>5</td><td>Размерность</td></tr></tbody></table>
            <div class="hs"><i></i></div>
          </fieldset>
        </div>
        <div class="hs2 low"><i></i></div>
      </section>
    </aside>

    <main class="main2">
      <div class="view">
        <svg class="scene" viewBox="0 0 881 342" role="img" aria-label="Модель">
          <g id="model" transform="translate(237 40) scale(.33333)"></g>
          <g fill="none" stroke-width="2.400"><path d="M23 319V308" stroke="#0e0"/><path d="M23 302l-3 7h6z" fill="#0e0"/><path d="M23 320h14" stroke="#e00"/><path d="M42 320l-7-3v6z" fill="#e00"/><path d="M23 321l-3 6" stroke="#00c" stroke-width="4"/></g>
          <text x="21" y="301" class="ax" fill="#2bd6c0">Y</text><text x="40" y="318" class="ax" fill="#d36bd0">X</text>
        </svg>
        <div class="brand">Scientific<br>View</div>
        <div class="met"><b>Met:</b> <b>Time:</b>4.597436 сек <b>Array:</b>Material <b>Min/max:</b>1.000000e+00 : 2.000000e+00</div>
        <div class="legend"><h2>Material</h2><div class="scale"><div class="ramp"></div><ol><li>2</li><li>1.888888</li><li>1.777777</li><li>1.666666</li><li>1.555555</li><li>1.444444</li><li>1.333333</li><li>1.222222</li><li>1.111111</li><li>1</li></ol></div></div>
      </div>
      <div class="time">
        <label for="num">№</label><input id="num" class="num" value="47">
        <label for="val">Значение</label><input id="val" class="val" value="4.59744">
        <button class="pb"><svg viewBox="0 0 12 12"><path d="M1 2h5M1 5h4M1 8h3" stroke="#888"/><path d="M7 2h4" stroke="#888"/><circle cx="8" cy="8" r="3.200" fill="#2f8fe8"/></svg></button>
        <button class="pb"><svg><use href="#loop"/></svg></button>
        <input class="range big" type="range" min="0" max="1000" value="893" aria-label="Время">
        <button class="pb"><svg viewBox="0 0 12 12"><path d="M0 6l5-5v3h6v4H5v3z" fill="#1e8cf5"/></svg></button>
        <button class="pb"><svg viewBox="0 0 12 12"><path d="M12 6L7 1v3H1v4h6v3z" fill="#1e8cf5"/></svg></button>
        <button class="pb"><svg viewBox="0 0 12 12"><path d="M2 6l7-5v10z" fill="#1e8cf5"/></svg></button>
        <button class="pb"><svg viewBox="0 0 12 12"><path d="M0 6l5-4v8zM12 6L7 2v8z" fill="#1e8cf5"/></svg></button>
        <button class="pb"><svg viewBox="0 0 12 12"><path d="M10 6L3 1v10z" fill="#1e8cf5"/></svg></button>
        <button class="pb"><svg viewBox="0 0 12 12"><path d="M2 2h8v8H2z" fill="#1e8cf5"/></svg></button>
        <button class="pb"><svg><use href="#cam"/></svg></button>
        <label class="stat"><input type="checkbox">Стат. палитра</label>
        <button class="set" disabled>Установить</button>
      </div>
      <div class="console">
        <div class="rail"><button><svg viewBox="0 0 12 12"><path d="M1 3l4-2 6 1v6l-5 3-5-2z" fill="#aaa"/><path d="M1 3l5 1.500V11L1 9z" fill="#555"/><path d="M6 4.500L11 2v6l-5 3z" fill="#888"/></svg></button><button class="chev"><svg viewBox="0 0 12 8"><path d="M1 1l2.500 3L1 7M4.500 1L7 4 4.500 7M8 1l2.500 3L8 7" fill="none" stroke="#444"/></svg></button><button class="ud"><svg viewBox="0 0 6 4"><path d="M0 4h6L3 0z" fill="#000"/></svg></button><button class="ud"><svg viewBox="0 0 6 4"><path d="M0 0h6L3 4z" fill="#000"/></svg></button></div>
        <div class="edit">
          <div class="tabs2"><button>Консоль</button><button class="on">Редактор кода</button><button>Результаты</button></div>
          <textarea aria-label="Код"></textarea>
          <div class="edbar">
            <button><svg><use href="#fold"/></svg></button><button><svg><use href="#save"/></svg></button><i class="sp"></i>
            <button><svg viewBox="0 0 12 12"><circle cx="6" cy="6" r="4" fill="none" stroke="#999"/><path d="M3.500 8.500l5-5" stroke="#999"/></svg></button>
            <button><svg viewBox="0 0 12 12"><path d="M2 2v3.500h3.500M2.500 5.500C4 2 10 2.500 10 6c0 2-1.500 4-4 4" fill="none" stroke="#999"/></svg></button>
            <button><svg viewBox="0 0 12 12"><path d="M8 2C3 2 2 5 2 7s3 4 6 3c2-1 2-4 0-4.500M6 5.500h3V8" fill="none" stroke="#999"/></svg></button><i class="sp"></i>
            <button><svg viewBox="0 0 12 12"><circle cx="6" cy="6" r="2" fill="#d04020"/></svg></button>
            <button><svg viewBox="0 0 12 12"><path d="M2 2l8 4-8 4z" fill="#999"/></svg></button><i class="sp"></i>
            <button><svg viewBox="0 0 12 12"><path d="M1 2h10M1 5h4M1 8h3" stroke="#999"/><path d="M5 8a3 3 0 0 1 5.500-1.500M11 8.500a3 3 0 0 1-5.500 1.500" stroke="#999" fill="none"/></svg></button><i class="sp"></i>
            <button class="mac">Макросы<svg viewBox="0 0 6 4"><path d="M0 0h6L3 4z" fill="#222"/></svg></button>
          </div>
        </div>
        <div class="vs"><i></i></div>
      </div>
    </main>
  </div>
  <footer class="status"><span class="grow">Окно визуализации</span><output>X: 0.31180657803751</output><output>Y: 1.01388597118453</output><output>Z: -0.21706932975779</output></footer>
</section>
<script src="mesh.js"></script>
</body>
</html>
```
FILE: mesh.js
```js
// Builds the finite element mesh: a red plate and a blue column with a cut-out sector.
(function () {
  var g = document.getElementById('model');
  var NS = 'http://www.w3.org/2000/svg';
  function add(d, fill, stroke, w) {
    var p = document.createElementNS(NS, 'path');
    p.setAttribute('d', d);
    p.setAttribute('fill', fill || 'none');
    if (stroke) { p.setAttribute('stroke', stroke); p.setAttribute('stroke-width', w || 2); }
    g.appendChild(p);
  }
  function mix(a, b, t) { return [a[0] + (b[0] - a[0]) * t, a[1] + (b[1] - a[1]) * t]; }
  function line(pts) { return 'M' + pts.map(function (p) { return p[0].toFixed(1) + ' ' + p[1].toFixed(1); }).join('L'); }
  // Point on a polyline, evenly by parameter.
  function along(pts, t) {
    var n = pts.length - 1, i = Math.min(n - 1, Math.floor(t * n));
    return mix(pts[i], pts[i + 1], t * n - i);
  }
  function surface(f, nu, nv, fill, stroke, w) {
    var i, j, edge = [], d = '', row;
    for (i = 0; i <= 40; i++) edge.push(f(i / 40, 0));
    for (i = 0; i <= 40; i++) edge.push(f(1, i / 40));
    for (i = 40; i >= 0; i--) edge.push(f(i / 40, 1));
    for (i = 40; i >= 0; i--) edge.push(f(0, i / 40));
    add(line(edge) + 'Z', fill, fill, 1);
    for (j = 0; j <= nv; j++) { row = []; for (i = 0; i <= 40; i++) row.push(f(i / 40, j / nv)); d += line(row); }
    for (i = 0; i <= nu; i++) { row = []; for (j = 0; j <= 20; j++) row.push(f(i / nu, j / 20)); d += line(row); }
    add(d, 'none', stroke, w);
  }
  function quad(a, b, c, d) { return function (u, v) { return mix(mix(a, b, u), mix(d, c, u), v); }; }

  var A = [343, 447], B = [986, 475], C = [848, 774], D = [205, 746], E = [214, 892], F = [862, 912], G = [994, 625];
  surface(quad(A, B, C, D), 24, 24, '#a80000', '#561414', 1.5);
  surface(quad(D, C, F, E), 24, 6, '#800000', '#4b1a1a', 2);
  surface(quad(C, B, G, F), 24, 6, '#7a0000', '#4b1616', 2);

  var leftSil = [[430, 125], [436, 235], [442, 340], [441, 440], [434, 530], [420, 600]];
  var cutOut = [[448, 158], [457, 260], [462, 360], [460, 460], [454, 560], [448, 659]];
  var cutIn = [[560, 120], [545, 220], [542, 330], [546, 430], [552, 530], [556, 624]];
  var coreL = [[537, 195], [539, 300], [543, 400], [550, 500], [556, 600], [560, 690]];
  var coreR = [[608, 195], [612, 300], [620, 400], [630, 500], [643, 600], [652, 684]];
  var outL = [[612, 168], [612, 280], [618, 390], [630, 490], [643, 590], [652, 684]];
  var rightSil = [[691, 105], [697, 215], [706, 320], [720, 415], [743, 510], [769, 605]];
  function between(l, r, bulge) {
    return function (u, v) {
      var p = along(l, v), q = along(r, v), m = mix(p, q, u);
      return [m[0], m[1] + bulge * 4 * u * (1 - u)];
    };
  }
  var ink = '#26264f';
  add('M430 125L449 160L560 118L612 168L691 105L697 215L620 300H500L438 260Z', '#000084');
  surface(between(leftSil, cutOut, 7), 3, 26, '#00008f', ink, 2);
  surface(between(cutOut, cutIn, 0), 8, 26, '#000084', ink, 2);
  add('M556 120L612 168V250H540Z', '#00007c');
  surface(quad([562, 122], [608, 166], [608, 200], [562, 165]), 5, 3, '#000080', ink, 2);
  surface(between(outL, rightSil, 20), 7, 25, '#00009c', ink, 2);
  surface(between(coreL, coreR, 0), 3, 21, '#000096', ink, 2);
  add('M537 202C537 162 608 162 608 202Z', '#0000b4');
  add('M541 192h63M546 185h54M554 178h38M560 173l-8 28M574 172v29M588 173l8 28', 'none', ink, 1.5);

  // Top disc with its missing sector.
  var cx = 561, cy = 115, rx = 131, ry = 56, from = 1.17, to = 2.6;
  function disc(u, v) {
    var a = to + (Math.PI * 2 - (to - from)) * u;
    return [cx + rx * v * Math.cos(a), cy + (1 - v) * 5 + ry * v * Math.sin(a) - 9 * v * Math.cos(a)];
  }
  surface(disc, 30, 8, '#0000b2', ink, 1.5);
})();
```
FILE: styles.css
```css
:root {
  --ui: "Noto Sans", "Open Sans", sans-serif;
  --alt: Roboto, "Open Sans", sans-serif;
  --face: #f0f0f0;
  --line: #c8c8c8;
  --blue: #0078d7;
}
* { box-sizing: border-box; }
body, p, ul, ol, h2, fieldset { margin: 0; padding: 0; }
ul, ol { list-style: none; }
button, input, select, textarea { font: inherit; color: inherit; margin: 0; padding: 0; border: 0; background: none; outline: 0; }
button { white-space: nowrap; }
button svg { display: block; }
.defs { position: absolute; width: 0; height: 0; }
.grow { flex: 1; text-align: left; }
.i12 { width: 12px; height: 12px; flex: none; }

.desk { display: flex; gap: 26px; height: 100vh; background: #fff; overflow: hidden; font: 9px/13px var(--ui); color: #111; }
.win { display: flex; flex-direction: column; flex: 1 1 0; min-width: 0; background: var(--face); overflow: hidden; }
.title { display: flex; align-items: center; flex: none; height: 17px; padding-left: 1px; gap: 4px; background: linear-gradient(90deg, #eef6f8, #e9f3fb 40%, #edf5f8); color: #444; font-size: 9px; }
.winbtns { display: flex; gap: 25px; padding-right: 13px; }
.winbtns svg { width: 10px; height: 10px; }

/* Left window */
.menubar { display: flex; gap: 6px; height: 14px; flex: none; padding: 1px 3px 0; border-bottom: 1px solid #ccc; }
.bigbar { display: flex; align-items: center; height: 23px; flex: none; border-top: 1px solid #fff; border-bottom: 1px solid #ccc; gap: 4px; padding-left: 4px; }
.bigbar button svg { width: 17px; height: 17px; }
.vline { width: 1px; height: 100%; background: #bbb; margin-left: -2px; }
.vline.lone { margin-left: 0; }
.grip2 { width: 3px; height: 18px; border-left: 1px solid #ccc; border-right: 1px solid #bbb; }
.work { display: grid; grid-template-columns: 26% 1fr; flex: 1; min-height: 0; }
.dock { display: flex; flex-direction: column; padding: 0 11px 0 7px; }
.dockhead { display: flex; align-items: center; height: 17px; gap: 8px; color: #555; margin-left: -6px; }
.dockhead svg { width: 7px; height: 7px; }
.dock .dockhead { margin-right: -3px; }
.tree { position: relative; flex: 1; margin: 4px 0 8px; background: #fff; border-left: 1px solid #aaa; border-top: 1px solid #888; }
.tree ul ul { padding-left: 15px; }
.row { display: flex; align-items: center; height: 13px; padding-left: 5px; white-space: nowrap; }
.ex { width: 10px; height: 13px; flex: none; }
.ti { width: 11px; height: 11px; margin: 0 3px 0 2px; flex: none; }
.leaf { display: flex; align-items: center; height: 13px; flex: 1; overflow: hidden; }
.leaf.sel { background: var(--blue); color: #fff; }

.ctx { position: absolute; left: 138px; top: 87px; width: 198px; padding: 1px 2px 0; background: var(--face); border: 1px solid #e8e8e8; box-shadow: 1px 1px 0 1px #888; z-index: 2; }
.ctx button { display: flex; align-items: center; width: 100%; height: 15px; gap: 4px; white-space: nowrap; }
.ctx svg { width: 12px; height: 11px; flex: none; }
.ctx .arr { width: 3px; height: 5px; margin-right: 4px; }
.ctx hr { height: 1px; margin: 2px 0; border: 0; background: #aaa; }
.ctx hr.pale { margin-bottom: 1px; background: #e4e4e4; }
.ctx .hot { background: var(--blue); color: #fff; }
.ctx .strong { font-weight: 700; }

.center { display: flex; flex-direction: column; border-bottom: 1px solid #666; margin-bottom: 1px; }
.tabs { display: flex; height: 16px; padding-top: 1px; }
.tabs button { padding: 0 9px 0 8px; border-top: 1px solid #f8f8f8; border-right: 1px solid #f8f8f8; }
.tabs .on { border-right-color: #555; }
.page { flex: 1; display: flex; flex-direction: column; padding: 17px 19px 20px 20px; border-top: 1px solid #fafafa; border-right: 1px solid #999; }
.pick { display: flex; align-items: flex-start; flex: 1; gap: 5px; margin-top: 4px; }
.files { flex: 1; align-self: stretch; background: #fff; border-left: 1px solid #888; border-top: 1px solid #777; line-height: 12px; }
.files li { padding-left: 1px; }
.files .cur { background: #f0f0f0; }
.classic { width: 56px; height: 18px; border: 1px solid #fff; border-right-color: #666; border-bottom-color: #666; }

.log { flex: none; padding: 0 6px 20px 7px; }
.log .dockhead { height: 19px; }
.logbox { margin-top: 3px; height: 50px; background: #fff; border: 1px solid #aaa; border-top-color: #777; }
.logbox table { width: 100%; border-collapse: collapse; table-layout: fixed; }
.logbox th { font-weight: 400; height: 17px; padding: 0; background: var(--face); border-bottom: 1px solid #aaa; border-right: 1px solid #aaa; }
.logbox .c1 { width: 75px; }
.flaps { display: flex; height: 12px; gap: 1px; }
.flaps button { padding: 0 1px 1px; background: #888; clip-path: polygon(0 0, 100% 0, calc(100% - 4px) 100%, 4px 100%); }
.flaps span { display: block; height: 11px; line-height: 11px; padding: 0 8px; background: var(--face); clip-path: polygon(0 0, 100% 0, calc(100% - 4px) 100%, 4px 100%); }
.flaps .on span { background: #fff; }

/* Right window */
.right-win { color: #444; font-family: var(--alt); }
.menubar2 { display: flex; align-items: center; height: 15px; flex: none; gap: 8px; background: #fff; }
.menubar2 .i12 { margin-right: -4px; }
.mdi { display: flex; gap: 1px; margin-left: auto; }
.mdi button { padding: 1px; border: 1px solid #eee; }
.mdi svg { width: 6px; height: 6px; }
.bar1 { display: flex; align-items: center; justify-content: space-between; height: 16px; flex: none; padding: 0 1px 0 2px; border-bottom: 1px solid #ccc; font-size: 8px; }
.bar1 svg { width: 11px; height: 11px; }
.bar1 button { flex: none; padding: 1px; }
.bar1 .car svg { width: 6px; height: 4px; }
.bar1 .car, .bar1 .more { padding: 0; }
.on > svg { background: #cde6fb; }
.grip { width: 2px; height: 11px; border-left: 1px dotted #999; flex: none; }
.sp { width: 1px; height: 11px; background: #ccc; flex: none; }
.combo { display: flex; align-items: center; width: 54px; height: 12px; background: #fff; padding: 0 3px; }
.combo select { appearance: none; flex: 1; min-width: 0; }
.combo svg { width: 7px; height: 6px; flex: none; }
.bar2 { display: flex; align-items: center; height: 21px; flex: none; padding-left: 2px; border-bottom: 1px solid #999; }
.tools2 { display: flex; justify-content: space-between; width: 69%; padding-left: 4px; }
.tools2 svg { width: 16px; height: 16px; }

.body2 { display: flex; flex: 1; min-height: 0; gap: 3px; font-size: 8px; }
.side { flex: none; width: 74px; display: flex; flex-direction: column; gap: 5px; overflow: hidden; }
.pane { border-left: 1px solid #bbb; border-right: 1px solid #ccc; padding: 2px 2px 0; overflow: hidden; flex: none; }
.pane.second { flex: 1; display: flex; flex-direction: column; min-height: 0; }
.ptab { display: flex; align-items: center; height: 13px; flex: none; gap: 1px; background: #f8f8f8; padding-left: 8px; }
.ptab span { flex: 1; overflow: hidden; min-width: 0; }
.ptab button { display: grid; place-items: center; width: 9px; height: 11px; background: #fff; flex: none; }
.ptab svg { width: 4px; height: 6px; }
.checks { display: flex; flex-direction: column; height: 133px; margin: 2px 0 0 3px; border: 1px solid #bbb; border-right: 0; background: #fff; overflow: hidden; gap: 1px; }
.checks label { display: flex; align-items: center; height: 13px; gap: 3px; padding-left: 1px; white-space: nowrap; flex: none; }
.checks .lit { background: #dcdcdc; }
input[type=checkbox] { appearance: none; width: 10px; height: 10px; border: 1px solid #999; border-radius: 2px; background: #f8f8f8; flex: none; }
.checks input:checked { background: #0b63b5; border-color: #0b63b5; display: grid; place-items: center; }
.checks input:checked::before { content: ""; width: 5px; height: 3px; border: solid #fff; border-width: 0 0 1px 1px; transform: rotate(-45deg); }
.hs { height: 13px; margin-top: auto; background: var(--face); padding: 5px 0 0 13px; flex: none; }
.hs i, .hs2 i { display: block; height: 3px; border-radius: 1px; background: #888; }
.hs2 { margin-top: 3px; height: 14px; flex: none; border: solid #fafafa; border-width: 1px 0; padding: 4px 0 0 13px; }
.hs2 i { width: 23px; }
.second .hs2 i { width: 19px; }
.props { flex: 1; padding: 15px 0 0 3px; overflow: hidden; min-height: 0; }
.modes { display: flex; gap: 2px; }
.modes button { padding: 1px; background: #fff; border: 1px solid #e2e2e2; flex: none; }
.modes .on { background: #cde6fb; border-color: #6fa3d0; }
.modes svg { width: 10px; height: 10px; }
.lab { display: block; margin-top: 3px; }
.range { appearance: none; background: linear-gradient(#d4d4d4, #d4d4d4) 0 9px / 100% 1px no-repeat, repeating-linear-gradient(90deg, #ccc 0 1px, transparent 1px 9px) 4px 1px / 100% 2px no-repeat; }
.range::-webkit-slider-thumb { appearance: none; width: 5px; height: 10px; margin-top: 2px; background: var(--blue); clip-path: polygon(50% 0, 100% 25%, 100% 100%, 0 100%, 0 25%); }
.range.small { display: block; width: 120px; height: 15px; margin-top: 2px; }
.props fieldset { border: 0; border-left: 1px solid #e2e2e2; padding-left: 1px; width: 130px; margin-top: 2px; }
.props legend { padding: 0 4px; line-height: 12px; }
.radios { display: flex; align-items: center; gap: 8px; padding: 1px 0 0 3px; white-space: nowrap; }
.radios label { display: flex; align-items: center; gap: 4px; }
input[type=radio] { appearance: none; width: 10px; height: 10px; border-radius: 50%; border: 1px solid #888; }
input[type=radio]:checked { border: 3px solid #0b63b5; background: #fff; }
.mat { appearance: none; display: block; width: 100%; height: 12px; margin-top: 4px; padding-left: 2px; background: #fff; border-bottom: 1px solid #999; }
.show { display: flex; gap: 4px; margin: 3px 0 0 1px; }
.show button { width: 58px; height: 14px; background: #fff; border: 1px solid #e2e2e2; line-height: 11px; }
.params { margin-top: 4px; border-spacing: 0; width: 100%; background: #fff; border-left: 1px solid #ccc; }
.params th { font-weight: 400; height: 17px; padding: 0 0 0 12px; text-align: left; background: #f7f7f7; }
.params td { height: 18px; padding: 0 0 0 1px; border-bottom: 1px solid #e6e6e6; }
.params td:first-child, .params th:first-child { width: 11px; padding: 0 0 0 3px; border-bottom-color: transparent; }
fieldset .hs { height: 13px; border-bottom: 1px solid #bbb; }

.main2 { flex: 1; min-width: 0; display: flex; flex-direction: column; }
.view { position: relative; flex: 1; min-height: 0; margin: 1px 1px 0 0; background: linear-gradient(#fff, #0080ff); overflow: hidden; font-family: "Liberation Sans", Arial, sans-serif; }
.scene { position: absolute; width: 100%; height: 100%; }
.ax { font-size: 7px; }
.brand, .met, .legend { position: absolute; }
.brand { left: 17px; top: 1px; text-align: center; font-size: 8px; line-height: 7px; color: #888; }
.met { left: 62px; top: 1px; color: #888; white-space: nowrap; font-size: 8px; }
.met b { font-weight: 400; color: #f07080; }
.legend { right: 70px; top: 48px; width: 78px; }
.legend h2 { font-size: 12px; line-height: 14px; font-weight: 400; color: #f01830; }
.scale { display: flex; align-items: center; padding-left: 16px; gap: 6px; color: #123; }
.ramp { width: 14px; height: 207px; border: 1px solid #7a8a9a; background: linear-gradient(#f00, #f80 12%, #fe0 22%, #9f0 33%, #3f0 44%, #0f2 56%, #0f9 67%, #0ef 78%, #08f 89%, #00f); }
.scale ol { display: flex; flex-direction: column; justify-content: space-between; height: 217px; font-size: 10px; line-height: 11px; }

.time { display: flex; align-items: center; height: 21px; flex: none; padding: 2px 3px 0 2px; gap: 4px; border-bottom: 1px solid #ccc; }
.time label { flex: none; }
.time .num, .time .val { height: 12px; background: #fff; padding-left: 2px; flex: none; }
.time .num { width: 24px; }
.time .val { width: 37px; }
.pb { padding: 1px; background: #fff; border: 1px solid #e4e4e4; border-radius: 1px; flex: none; }
.pb svg { width: 11px; height: 11px; }
.range.big { flex: 1; min-width: 0; height: 15px; }
.stat { display: flex; align-items: center; gap: 4px; padding-right: 3px; }
.set { width: 53px; height: 13px; background: #fafafa; color: #aaa; flex: none; }

.console { display: flex; height: 92px; flex: none; padding-top: 2px; }
.rail { display: flex; flex-direction: column; width: 17px; flex: none; padding-bottom: 1px; }
.rail button { display: grid; place-items: center; flex: 1; background: var(--face); border-bottom: 1px solid #ddd; }
.rail .chev { background: #f8f8f8; }
.rail .ud { flex: none; height: 11px; background: #fff; border: 1px solid #ddd; }
.rail svg { width: 10px; height: 10px; }
.rail .chev svg { height: 8px; }
.rail .ud svg { width: 6px; height: 4px; }
.edit { flex: 1; min-width: 0; display: flex; flex-direction: column; padding: 4px 0 1px 4px; }
.tabs2 { display: flex; height: 15px; flex: none; align-items: center; }
.tabs2 button { padding: 0 8px; height: 14px; background: #ededed; }
.tabs2 .on { background: #f9f9f9; }
.edit textarea { flex: 1; min-height: 0; background: #fff; border-bottom: 1px solid #ccc; resize: none; }
.edbar { display: flex; align-items: center; height: 17px; flex: none; gap: 4px; padding: 2px 0 0 2px; background: #f9f9f9; }
.edbar button { display: flex; align-items: center; height: 13px; padding: 0 1px; background: #fff; }
.edbar svg { width: 12px; height: 12px; }
.edbar .mac { gap: 5px; padding: 0 4px; }
.edbar .mac svg { width: 5px; height: 4px; }
.vs { width: 20px; margin-left: 2px; padding: 14px 0 0 8px; border-left: 1px solid #fafafa; }
.vs i { display: block; width: 3px; height: 56px; border-radius: 1px; background: #888; }

.status { display: flex; align-items: center; height: 15px; flex: none; padding-left: 3px; gap: 2px; border-top: 1px solid #777; color: #555; }
.status output { width: 88px; height: 12px; font-size: 8px; line-height: 10px; padding-left: 2px; border: 1px solid #bbb; white-space: nowrap; overflow: hidden; }
```
